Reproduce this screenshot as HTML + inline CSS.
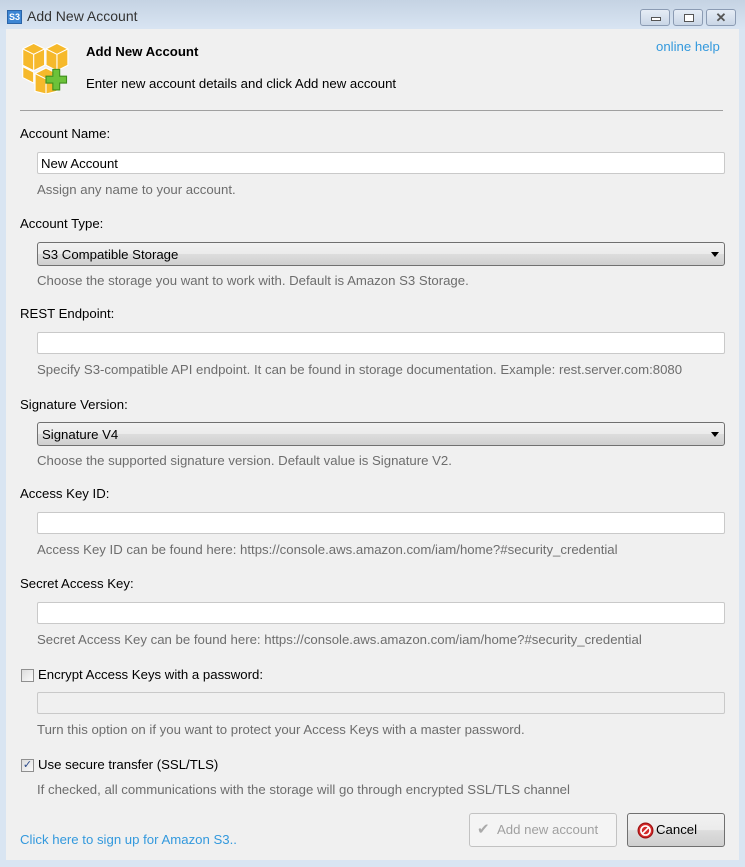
<!DOCTYPE html>
<html><head><style>
*{box-sizing:border-box;margin:0;padding:0}
body{width:745px;height:867px;position:relative;overflow:hidden;font-family:"Liberation Sans",sans-serif;font-size:13.2px;color:#000;background:#d9e5f2}
.tb{position:absolute;left:0;top:0;width:745px;height:30px;background:linear-gradient(#c5d3e3,#d9e5f3)}
.client{position:absolute;left:6px;top:29px;width:733px;height:831px;background:#f0f0f0}
.a{position:absolute;white-space:nowrap;line-height:15px}
.h{color:#6d6d6d}
.inp{position:absolute;left:37px;width:688px;height:22px;background:#fff;border:1px solid #c9c9c9;border-radius:2px}
.sel{position:absolute;left:37px;width:688px;height:24px;border:1px solid #707070;border-radius:3px;background:linear-gradient(#f2f2f2 0,#ebebeb 50%,#dddddd 51%,#cfcfcf 100%);padding:4px 4px;line-height:15px}
.sel:after{content:"";position:absolute;right:5px;top:9px;border-left:4px solid transparent;border-right:4px solid transparent;border-top:5px solid #000}
.cb{position:absolute;left:21px;width:13px;height:13px;border:1px solid #8f8f8f;background:linear-gradient(135deg,#dcdcdc,#fafafa)}
.wb{position:absolute;top:9px;width:30px;height:17px;border:1px solid #8b9bb3;border-radius:3px;background:linear-gradient(#e6edf6,#c9d6e6)}
.btn{position:absolute;top:813px;height:34px;border-radius:3px}
</style></head><body>
<div class="tb"></div>
<div style="position:absolute;left:7px;top:10px;width:15px;height:14px;background:#3d86d4;border:1px solid #2a64a8;color:#fff;font-size:9px;line-height:12px;text-align:center;font-weight:bold">S3</div>
<div class="a" style="left:27px;top:9px;font-size:14px;color:#333">Add New Account</div>
<div class="wb" style="left:640px"><div style="position:absolute;left:10px;top:7px;width:10px;height:4px;border:1px solid #555;background:#fff"></div></div>
<div class="wb" style="left:673px"><div style="position:absolute;left:10px;top:4px;width:10px;height:8px;border:1px solid #555;background:#fff"></div></div>
<div class="wb" style="left:706px;color:#555;text-align:center;font-size:13px;line-height:15px;font-weight:bold">✕</div>
<div class="client"></div>
<svg style="position:absolute;left:20px;top:42px" width="52" height="52" viewBox="0 0 38 38">
<g fill="#f6b92b" stroke="#fff" stroke-width="0.8">
<path d="M2 5 L10 1 L18 5 L18 17 L10 21 L2 17Z"/><path d="M19 5 L27 1 L35 5 L35 17 L27 21 L19 17Z"/><path d="M2 5 L10 9 L18 5 M10 9 L10 21" fill="none"/><path d="M19 5 L27 9 L35 5 M27 9 L27 21" fill="none"/>
<path d="M11 23 L19 19 L27 23 L27 36 L19 38 L11 36Z"/><path d="M11 23 L19 27 L27 23 M19 27 L19 38" fill="none"/>
<path d="M2 18 L10 22 L10 30 L2 26Z"/>
</g>
<path d="M24 20h5v5h5v5h-5v5h-5v-5h-5v-5h5z" fill="#6cc23a" stroke="#3e8e1c" stroke-width="0.8"/>
</svg>
<div class="a" style="left:86px;top:44px;font-weight:bold">Add New Account</div>
<div class="a" style="left:86px;top:76px">Enter new account details and click Add new account</div>
<div class="a" style="left:656px;top:39px;color:#3399dd">online help</div>
<div style="position:absolute;left:20px;top:110px;width:703px;height:1px;background:#a0a0a0"></div>

<div class="a" style="left:20px;top:126px">Account Name:</div>
<div class="inp" style="top:152px"><span class="a" style="left:3px;top:3px">New Account</span></div>
<div class="a h" style="left:37px;top:182px">Assign any name to your account.</div>

<div class="a" style="left:20px;top:216px">Account Type:</div>
<div class="sel" style="top:242px">S3 Compatible Storage</div>
<div class="a h" style="left:37px;top:273px">Choose the storage you want to work with. Default is Amazon S3 Storage.</div>

<div class="a" style="left:20px;top:306px">REST Endpoint:</div>
<div class="inp" style="top:332px"></div>
<div class="a h" style="left:37px;top:362px">Specify S3-compatible API endpoint. It can be found in storage documentation. Example: rest.server.com:8080</div>

<div class="a" style="left:20px;top:397px">Signature Version:</div>
<div class="sel" style="top:422px">Signature V4</div>
<div class="a h" style="left:37px;top:453px">Choose the supported signature version. Default value is Signature V2.</div>

<div class="a" style="left:20px;top:486px">Access Key ID:</div>
<div class="inp" style="top:512px"></div>
<div class="a h" style="left:37px;top:542px">Access Key ID can be found here: https://console.aws.amazon.com/iam/home?#security_credential</div>

<div class="a" style="left:20px;top:576px">Secret Access Key:</div>
<div class="inp" style="top:602px"></div>
<div class="a h" style="left:37px;top:632px">Secret Access Key can be found here: https://console.aws.amazon.com/iam/home?#security_credential</div>

<div class="cb" style="top:669px"></div>
<div class="a" style="left:38px;top:667px">Encrypt Access Keys with a password:</div>
<div class="inp" style="top:692px;background:#f0f0f0"></div>
<div class="a h" style="left:37px;top:722px">Turn this option on if you want to protect your Access Keys with a master password.</div>

<div class="cb" style="top:759px;color:#2a4a8a;font-size:11px;line-height:11px;text-align:center">✓</div>
<div class="a" style="left:38px;top:757px">Use secure transfer (SSL/TLS)</div>
<div class="a h" style="left:37px;top:782px">If checked, all communications with the storage will go through encrypted SSL/TLS channel</div>

<div class="a" style="left:20px;top:832px;color:#3399dd">Click here to sign up for Amazon S3..</div>
<div class="btn" style="left:469px;width:148px;border:1px solid #c2c2c2;background:#f4f4f4"><span class="a" style="left:7px;top:8px;color:#aaa;font-size:15px">✔</span><span class="a" style="left:27px;top:8px;color:#a0a0a0">Add new account</span></div>
<div class="btn" style="left:627px;width:98px;border:1px solid #707070;background:linear-gradient(#f2f2f2,#ebebeb 50%,#dddddd 51%,#cfcfcf)">
<svg style="position:absolute;left:9px;top:8px" width="17" height="17" viewBox="0 0 16 16"><circle cx="8" cy="8" r="7" fill="#d42a2a" stroke="#9a1010"/><circle cx="8" cy="8" r="4.3" fill="none" stroke="#fff" stroke-width="1.6"/><path d="M5 11L11 5" stroke="#fff" stroke-width="1.6"/></svg>
<span class="a" style="left:28px;top:8px">Cancel</span></div>
</body></html>
